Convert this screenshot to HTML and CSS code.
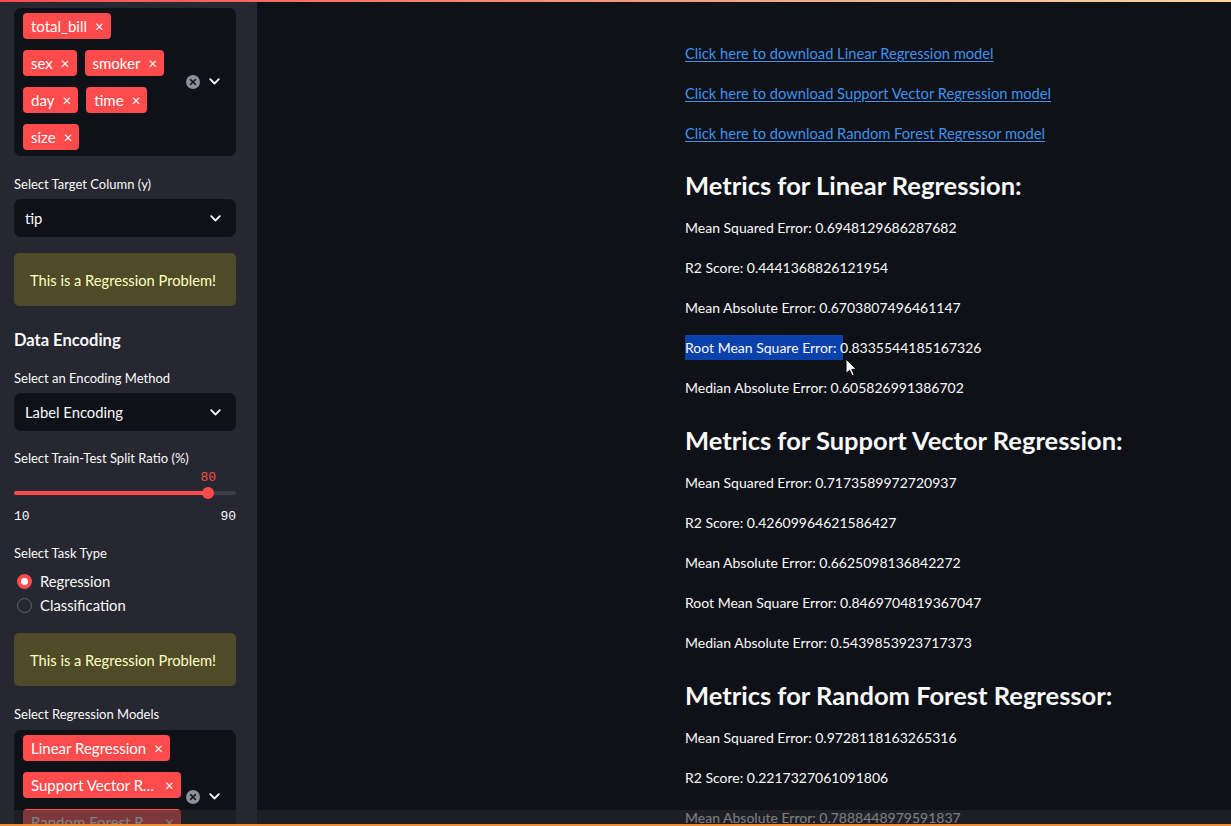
FILE: index.html
```html
<!DOCTYPE html>
<html>
<head>
<meta charset="utf-8">
<link rel="stylesheet" href="styles.css">
</head>
<body>
<div class="topbar"></div>
<div class="app">
  <aside class="sidebar">
    <div class="ms">
      <div class="ms-tags">
        <span class="tag">total_bill<span class="x">×</span></span>
        <span class="tag">sex<span class="x">×</span></span>
        <span class="tag">smoker<span class="x">×</span></span>
        <span class="tag">day<span class="x">×</span></span>
        <span class="tag">time<span class="x">×</span></span>
        <span class="tag">size<span class="x">×</span></span>
      </div>
      <div class="ms-icons">
        <span class="clear"><svg width="14" height="14" viewBox="0 0 14 14"><circle cx="7" cy="7" r="7" fill="#8e8f99"/><path d="M4.6 4.6 L9.4 9.4 M9.4 4.6 L4.6 9.4" stroke="#1b1c22" stroke-width="1.5" stroke-linecap="round"/></svg></span>
        <span class="chev"><svg width="11" height="7" viewBox="0 0 11 7"><path d="M1.2 1.2 L5.5 5.5 L9.8 1.2" fill="none" stroke="#fafafa" stroke-width="1.8" stroke-linecap="round" stroke-linejoin="round"/></svg></span>
      </div>
    </div>

    <div class="label lbl-target">Select Target Column (y)</div>
    <div class="select">
      <span>tip</span>
      <span class="chev"><svg width="11" height="7" viewBox="0 0 11 7"><path d="M1.2 1.2 L5.5 5.5 L9.8 1.2" fill="none" stroke="#fafafa" stroke-width="1.8" stroke-linecap="round" stroke-linejoin="round"/></svg></span>
    </div>

    <div class="warn warn-1">This is a Regression Problem!</div>

    <div class="side-h">Data Encoding</div>

    <div class="label lbl-enc">Select an Encoding Method</div>
    <div class="select">
      <span>Label Encoding</span>
      <span class="chev"><svg width="11" height="7" viewBox="0 0 11 7"><path d="M1.2 1.2 L5.5 5.5 L9.8 1.2" fill="none" stroke="#fafafa" stroke-width="1.8" stroke-linecap="round" stroke-linejoin="round"/></svg></span>
    </div>

    <div class="label lbl-split">Select Train-Test Split Ratio (%)</div>
    <div class="slider">
      <div class="slider-val"><span class="val" style="left: 87.5%">80</span></div>
      <div class="track"><div class="fill" style="width: 87.5%"></div><span class="thumb" style="left: 87.5%"></span></div>
      <div class="ticks"><span>10</span><span>90</span></div>
    </div>

    <div class="label lbl-task">Select Task Type</div>
    <div class="radios">
      <div class="radio on"><span class="dot"></span>Regression</div>
      <div class="radio"><span class="dot"></span>Classification</div>
    </div>

    <div class="warn warn-2">This is a Regression Problem!</div>

    <div class="label lbl-models">Select Regression Models</div>
    <div class="ms ms-2">
      <div class="ms-tags">
        <span class="tag">Linear Regression<span class="x">×</span></span>
        <span class="tag"><span class="trunc">Support Vector Regression</span><span class="x">×</span></span>
        <span class="tag"><span class="trunc">Random Forest Regressor</span><span class="x">×</span></span>
      </div>
      <div class="ms-icons">
        <span class="clear"><svg width="14" height="14" viewBox="0 0 14 14"><circle cx="7" cy="7" r="7" fill="#8e8f99"/><path d="M4.6 4.6 L9.4 9.4 M9.4 4.6 L4.6 9.4" stroke="#1b1c22" stroke-width="1.5" stroke-linecap="round"/></svg></span>
        <span class="chev"><svg width="11" height="7" viewBox="0 0 11 7"><path d="M1.2 1.2 L5.5 5.5 L9.8 1.2" fill="none" stroke="#fafafa" stroke-width="1.8" stroke-linecap="round" stroke-linejoin="round"/></svg></span>
      </div>
    </div>
  </aside>

  <main class="main">
    <div class="content">
      <p class="link-row"><a href="#">Click here to download Linear Regression model</a></p>
      <p class="link-row"><a href="#">Click here to download Support Vector Regression model</a></p>
      <p class="link-row"><a href="#">Click here to download Random Forest Regressor model</a></p>

      <h3>Metrics for Linear Regression:</h3>
      <p>Mean Squared Error: 0.6948129686287682</p>
      <p>R2 Score: 0.4441368826121954</p>
      <p>Mean Absolute Error: 0.6703807496461147</p>
      <p class="sel-row"><span class="sel">Root Mean Square Error: </span>0.8335544185167326<svg class="cursor" width="12" height="19" viewBox="0 0 12 19"><path d="M1 1 L1 15.5 L4.6 12.2 L7.2 18 L9.3 17 L6.8 11.4 L11.2 11.2 Z" fill="#ffffff" stroke="#000000" stroke-width="1" stroke-linejoin="round"/></svg></p>
      <p>Median Absolute Error: 0.605826991386702</p>

      <h3>Metrics for Support Vector Regression:</h3>
      <p>Mean Squared Error: 0.7173589972720937</p>
      <p>R2 Score: 0.42609964621586427</p>
      <p>Mean Absolute Error: 0.6625098136842272</p>
      <p>Root Mean Square Error: 0.8469704819367047</p>
      <p>Median Absolute Error: 0.5439853923717373</p>

      <h3>Metrics for Random Forest Regressor:</h3>
      <p>Mean Squared Error: 0.9728118163265316</p>
      <p>R2 Score: 0.2217327061091806</p>
      <p>Mean Absolute Error: 0.7888448979591837</p>
    </div>
  </main>
</div>
<div class="player-bar"></div>
</body>
</html>
```

FILE: styles.css
```css
* { box-sizing: border-box; }

html, body {
  margin: 0;
  padding: 0;
  height: 100%;
  overflow: hidden;
}

body {
  background: #0e1117;
  color: #fafafa;
  font-family: "Lato", "Liberation Sans", sans-serif;
}

.topbar {
  position: fixed;
  top: 0;
  left: 0;
  right: 0;
  height: 2px;
  background: linear-gradient(90deg, #ff4b4b, #f0b48a 70%, #ffd79a);
  z-index: 5;
}

.app {
  display: flex;
  height: 100vh;
  overflow: hidden;
}

/* ---------- sidebar ---------- */
.sidebar {
  width: 257px;
  flex: 0 0 257px;
  background: #262730;
  padding: 8px 21px 0 14px;
  overflow: hidden;
}

.ms {
  background: #0e1117;
  border-radius: 7px;
  display: flex;
  padding: 5px 0 6px 9px;
}

.ms-tags {
  width: 145px;
  flex: 0 0 145px;
  display: flex;
  flex-wrap: wrap;
  gap: 11px 8px;
  align-content: flex-start;
}

.ms-2 {
  margin-top: 6px;
  height: 134px;
}

.ms-2 .ms-tags {
  width: 157px;
  flex: 0 0 157px;
}

.tag {
  display: inline-flex;
  align-items: center;
  height: 26px;
  padding: 0 7px 0 8px;
  background: #ff4b4b;
  color: #ffffff;
  border-radius: 4px;
  font-size: 15px;
  white-space: nowrap;
}

.tag .x {
  margin-left: 8px;
  font-size: 15px;
  line-height: 1;
}

.tag .trunc {
  overflow: hidden;
  text-overflow: ellipsis;
  white-space: nowrap;
  width: 126px;
}

.ms-icons {
  flex: 1;
  display: flex;
  align-items: center;
  padding-left: 18px;
  gap: 9px;
}

.ms-2 .ms-icons {
  padding-left: 6px;
}

.clear, .chev {
  display: inline-flex;
}

.label {
  font-size: 13px;
  height: 20px;
  line-height: 20px;
  color: #fafafa;
}

.lbl-target { margin-top: 18px; }
.lbl-enc { margin-top: 16px; }
.lbl-split { margin-top: 17px; }
.lbl-task { margin-top: 16px; }
.lbl-models { margin-top: 18px; }

.select {
  margin-top: 5px;
  height: 38px;
  background: #0e1117;
  border-radius: 7px;
  display: flex;
  align-items: center;
  justify-content: space-between;
  padding: 0 15px 0 11px;
  font-size: 14.8px;
}

.warn {
  height: 53px;
  background: #4f4b28;
  color: #ffffc2;
  border-radius: 5px;
  display: flex;
  align-items: center;
  padding-left: 16px;
  font-size: 14.7px;
}

.warn-1 { margin-top: 16px; }
.warn-2 { margin-top: 16px; }

.side-h {
  margin-top: 22px;
  height: 24px;
  line-height: 24px;
  font-size: 16.5px;
  font-weight: 700;
}

.slider-val {
  position: relative;
  height: 20px;
}

.slider-val .val {
  position: absolute;
  transform: translateX(-50%);
  top: 2px;
  font-family: "Liberation Mono", "DejaVu Sans Mono", monospace;
  font-size: 13px;
  color: #ff4b4b;
  line-height: 16px;
}

.track {
  position: relative;
  height: 4px;
  margin: 3px 0;
  background: #3c3e48;
  border-radius: 2px;
}

.fill {
  height: 4px;
  background: #ff4b4b;
  border-radius: 2px;
}

.thumb {
  position: absolute;
  top: -4px;
  width: 12px;
  height: 12px;
  margin-left: -6px;
  border-radius: 50%;
  background: #ff4b4b;
}

.ticks {
  margin-top: 12px;
  display: flex;
  justify-content: space-between;
  height: 20px;
  line-height: 20px;
  font-family: "Liberation Mono", "DejaVu Sans Mono", monospace;
  font-size: 13px;
  color: #fafafa;
}

.radios {
  margin-top: 6px;
}

.radio {
  height: 24px;
  display: flex;
  align-items: center;
  font-size: 14.8px;
  padding-left: 3px;
}

.radio .dot {
  width: 15px;
  height: 15px;
  border-radius: 50%;
  border: 1.5px solid #62646e;
  margin-right: 8px;
  flex: 0 0 15px;
}

.radio.on .dot {
  border: 4px solid #ff4b4b;
  background: #ffffff;
}

/* ---------- main ---------- */
.main {
  flex: 1;
  padding: 33px 0 0 428px;
  overflow: hidden;
}

.content p {
  margin: 0;
  height: 40px;
  line-height: 40px;
  font-size: 14px;
  white-space: nowrap;
}

.content .link-row {
  font-size: 14.7px;
}

.content a {
  color: #3d93ec;
  text-decoration: underline;
  text-underline-offset: 2px;
}

.content h3 {
  margin: 9px 0 0;
  height: 46px;
  line-height: 46px;
  font-size: 25.5px;
  font-weight: 700;
  white-space: nowrap;
}

.sel-row {
  position: relative;
}

.sel {
  background: #0b41ad;
  display: inline-block;
  line-height: 25px;
  white-space: pre;
  padding-right: 3px;
  margin-right: -3px;
}

.cursor {
  position: absolute;
  left: 160px;
  top: 30px;
}

.player-bar {
  position: fixed;
  left: 0;
  right: 0;
  bottom: 0;
  height: 16px;
  background: rgba(40, 41, 46, 0.6);
  border-bottom: 2px solid #f08c32;
  z-index: 6;
}
```
